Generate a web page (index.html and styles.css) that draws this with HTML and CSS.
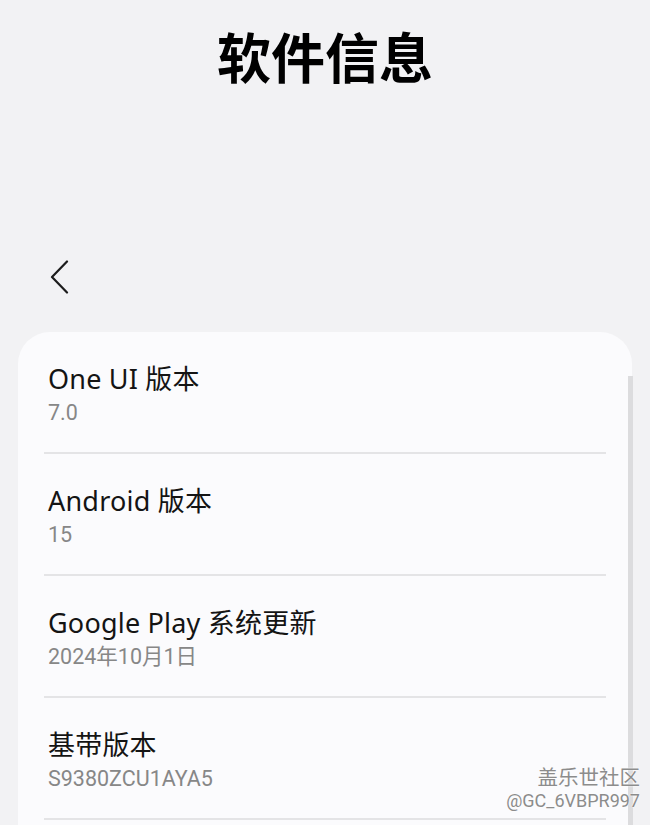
FILE: index.html
```html
<!DOCTYPE html>
<html lang="zh-CN">

<head>
    <meta charset="UTF-8">
    <meta name="viewport" content="width=device-width, initial-scale=1.0">
    <title>软件信息</title>
    <link rel="stylesheet" href="styles.css">
</head>

<body>
    <div id="main">
        <h1 class="title">软件信息</h1>
        <div class="nav">
            <svg class="back" width="22" height="34" viewBox="0 0 22 34">
                <path d="M18 1.5 L3 17 L18 32.5" fill="none" stroke="#1c1c1c" stroke-width="2.2" stroke-linecap="round" stroke-linejoin="round" />
            </svg>
        </div>
        <div class="card">
            <div class="item">
                <div class="item-title">One UI 版本</div>
                <div class="item-sub">7.0</div>
            </div>
            <div class="item">
                <div class="item-title">Android 版本</div>
                <div class="item-sub">15</div>
            </div>
            <div class="item">
                <div class="item-title">Google Play 系统更新</div>
                <div class="item-sub">2024年10月1日</div>
            </div>
            <div class="item">
                <div class="item-title">基带版本</div>
                <div class="item-sub">S9380ZCU1AYA5</div>
            </div>
        </div>
        <div class="scrollbar"></div>
        <div class="watermark">
            <div class="wm-name">盖乐世社区</div>
            <div class="wm-id">@GC_6VBPR997</div>
        </div>
    </div>
</body>

</html>
```

FILE: styles.css
```css
* {
    margin: 0;
    padding: 0;
    box-sizing: border-box;
}

body {
    background-color: #f2f2f4;
    font-family: Roboto, "Noto Sans CJK SC", sans-serif;
    color: #111;
}

#main {
    position: relative;
    width: 650px;
    height: 825px;
    overflow: hidden;
}

.title {
    padding-top: 29px;
    font-size: 54px;
    line-height: 54px;
    font-weight: bold;
    text-align: center;
    font-family: "Noto Sans CJK SC", sans-serif;
    color: #000;
}

.nav {
    height: 62px;
    margin-top: 163px;
    display: flex;
    align-items: center;
    padding-left: 49px;
}

.card {
    margin: 24px 18px 0;
    padding: 0 26px;
    background-color: #fbfbfd;
    border-radius: 32px 32px 0 0;
    height: 600px;
}

.item {
    height: 122px;
    padding: 30px 4px 0;
    border-bottom: 2px solid #e4e4e6;
}

.item-title {
    font-family: "Noto Sans", "Noto Sans CJK SC", sans-serif;
    font-size: 27px;
    line-height: 34px;
    letter-spacing: 0.2px;
    color: #141414;
}

.item-sub {
    margin-top: 2px;
    font-size: 21.5px;
    line-height: 30px;
    color: #878787;
}

/* 右侧滚动条 */
.scrollbar {
    position: absolute;
    top: 376px;
    right: 17px;
    bottom: 0;
    width: 5px;
    background-color: #dcdcde;
}

.watermark {
    position: absolute;
    right: 10px;
    bottom: 12px;
    text-align: right;
    color: #8c8c8c;
    text-shadow: 0 0 2px #fff, 0 0 1px #fff;
}

.wm-name {
    font-size: 20.5px;
    line-height: 26px;
    font-family: "Noto Sans CJK SC", sans-serif;
}

.wm-id {
    font-size: 18px;
    line-height: 24px;
}
```
